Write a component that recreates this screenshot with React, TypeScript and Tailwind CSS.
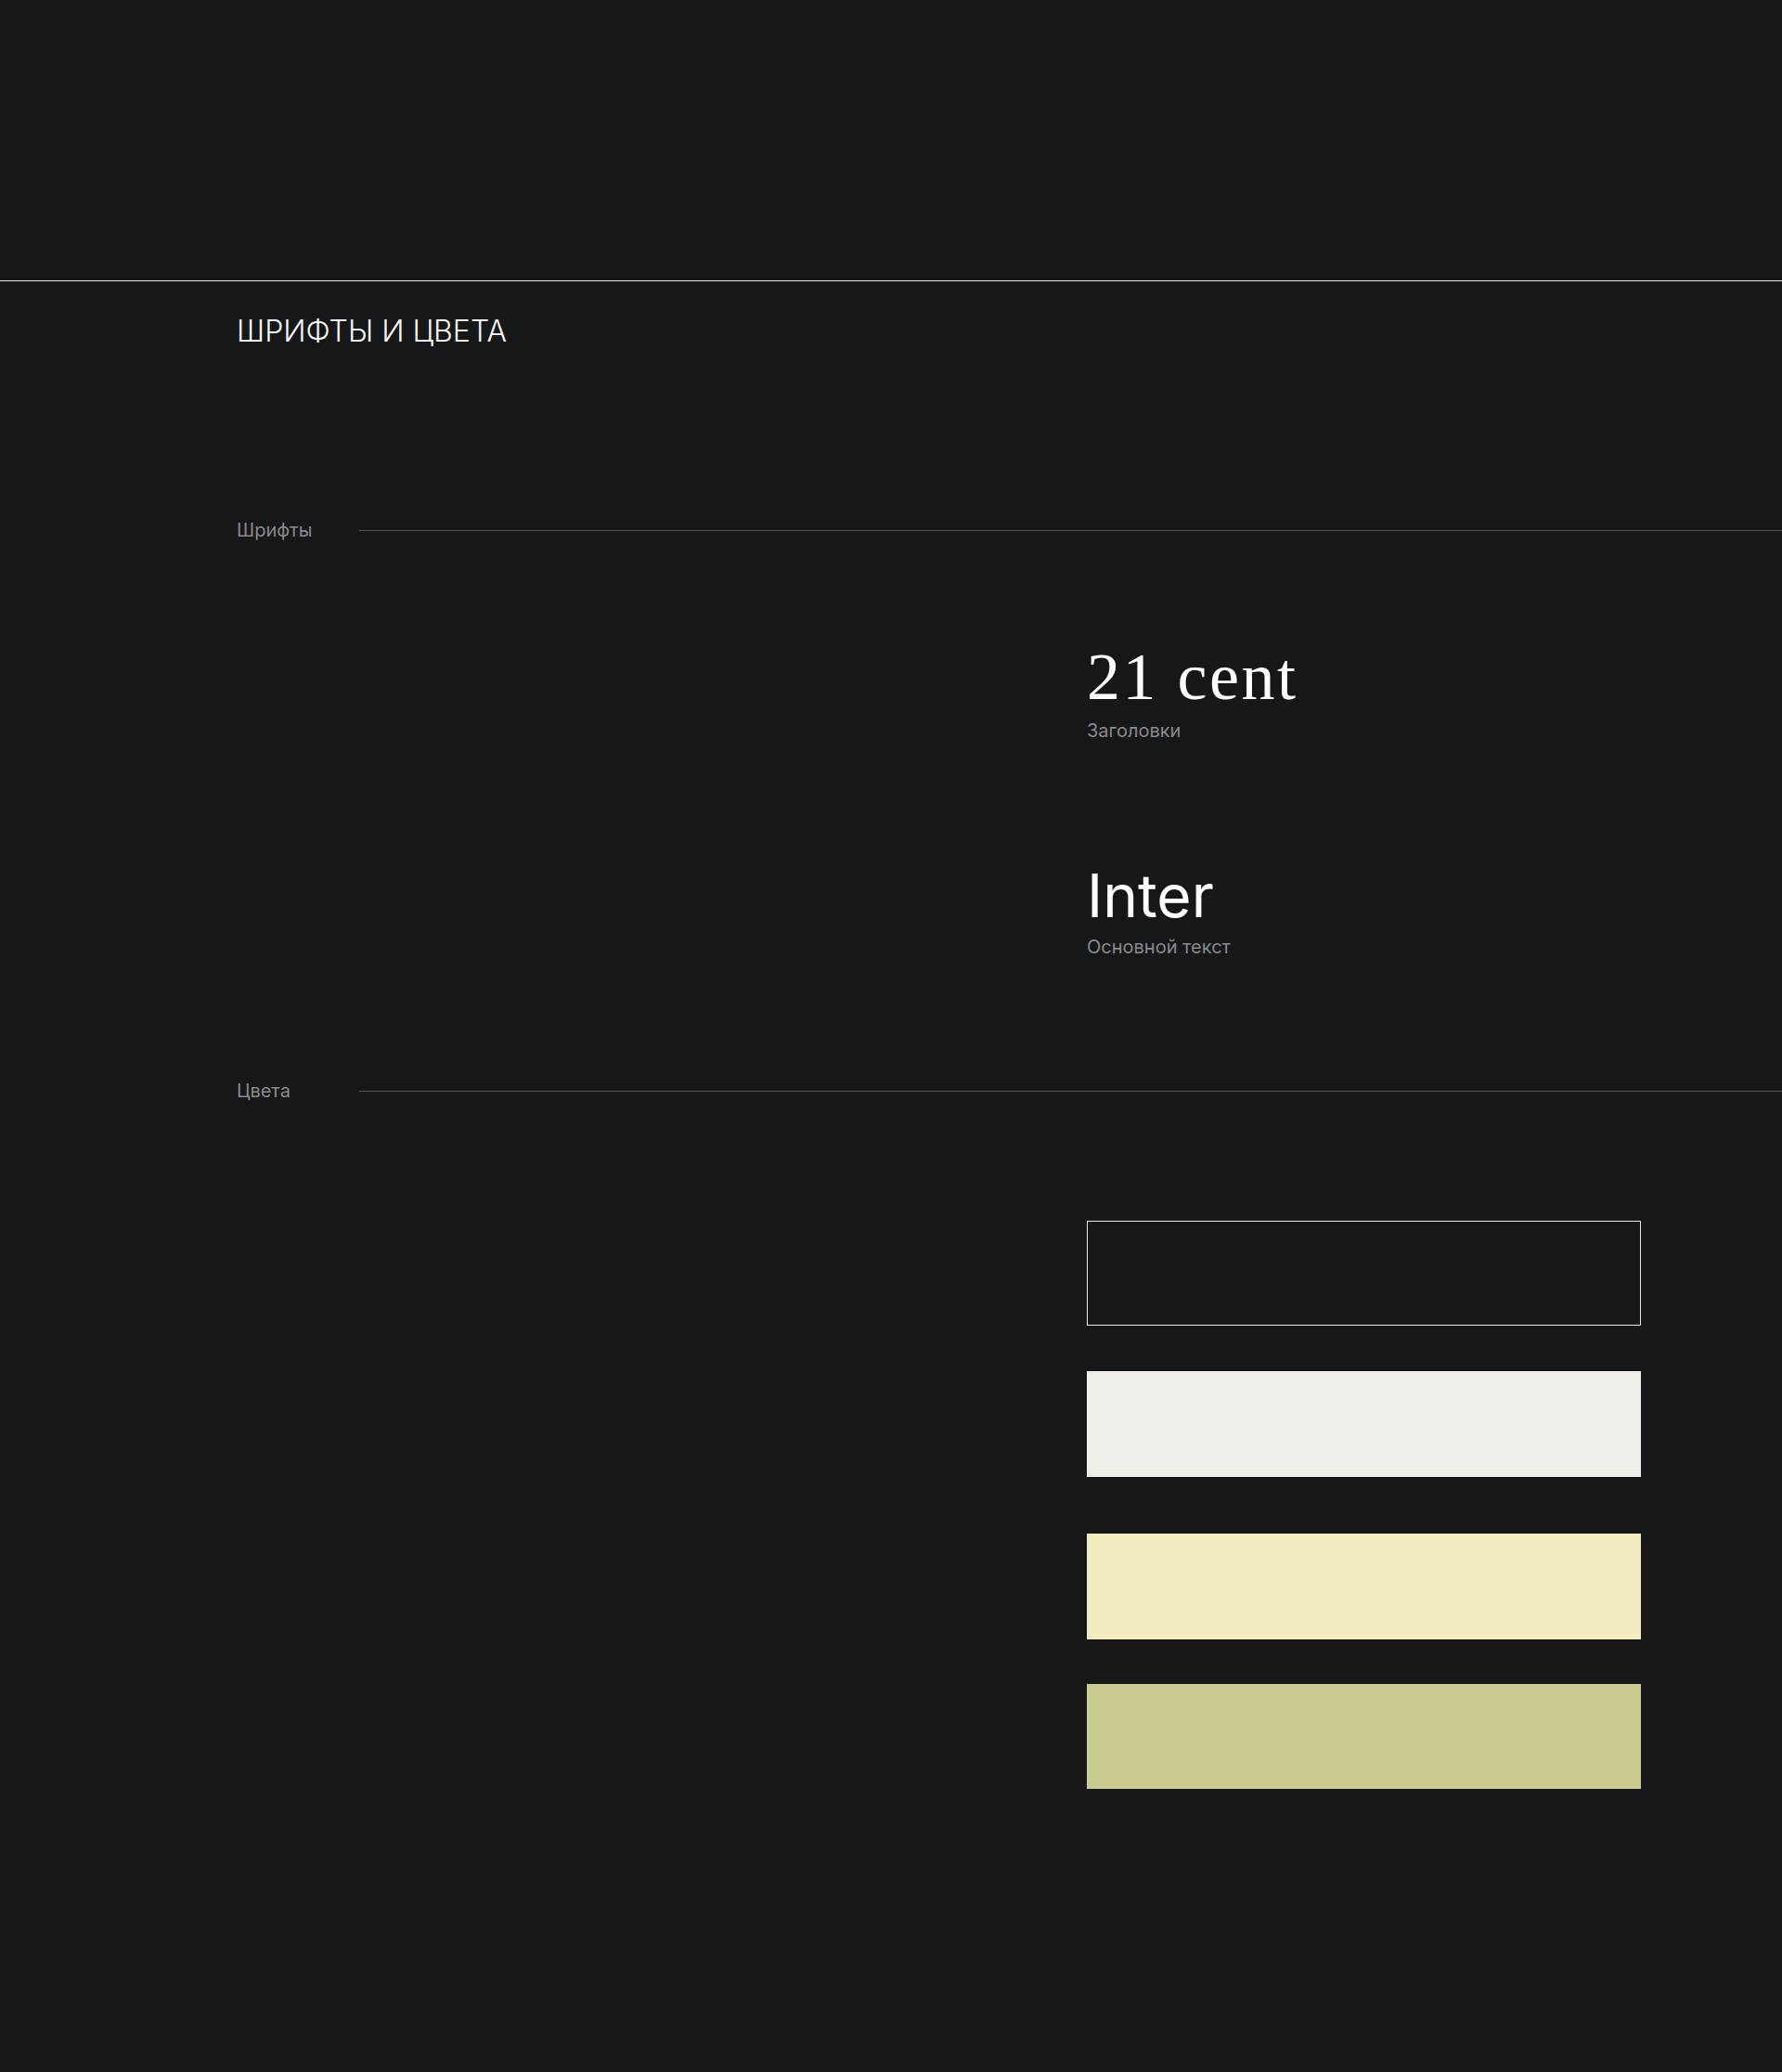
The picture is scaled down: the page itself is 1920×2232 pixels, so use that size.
import React from "react";

const swatches = [
  { cls: "h-[113px] border border-[#e8e8e8] bg-[#161719]", mt: "mt-0" },
  { cls: "h-[114px] bg-[#f0eee8]", mt: "mt-[49px]" },
  { cls: "h-[114px] bg-[#f3ecc0]", mt: "mt-[61px]" },
  { cls: "h-[113px] bg-[#cbcc91]", mt: "mt-[48px]" },
];

export default function App() {
  return (
    <div
      className="min-h-[2232px] w-full bg-[#161719] text-white"
      style={{ fontFamily: "Inter, 'Noto Sans', sans-serif" }}
    >
      <div className="h-[302px]" />
      <section className="border-t border-[#e6e6e6]">
        <div className="pl-[255px] pt-[34px]">
          <h2 className="text-[32px] leading-[40px] font-light text-[#f7f7f7]">
            ШРИФТЫ И ЦВЕТА
          </h2>
        </div>

        {/* Fonts row */}
        <div className="mt-[182px] flex items-center pl-[255px]">
          <span className="w-[132px] text-[20px] leading-[24px] text-[#8a8a8a]">Шрифты</span>
          <div className="h-px flex-1 bg-[#54565a]" />
        </div>

        <div className="pl-[1171px]">
          <div className="mt-[110px]">
            <div
              className="text-[72px] leading-[72px] text-white tracking-[0.035em]"
              style={{ fontFamily: "'Liberation Serif', 'DejaVu Serif', serif" }}
            >
              21 cent
            </div>
            <div className="mt-[10px] text-[20px] leading-[24px] text-[#8a8a8a]">Заголовки</div>
          </div>
          <div className="mt-[134px]">
            <div className="text-[64px] leading-[64px] text-white">Inter</div>
            <div className="mt-[11px] text-[20px] leading-[24px] text-[#8a8a8a]">Основной текст</div>
          </div>
        </div>

        {/* Colors row */}
        <div className="mt-[131px] flex items-center pl-[255px]">
          <span className="w-[132px] text-[20px] leading-[24px] text-[#8a8a8a]">Цвета</span>
          <div className="h-px flex-1 bg-[#54565a]" />
        </div>

        <div className="mt-[128px] pl-[1171px]">
          <div className="flex w-[597px] flex-col">
            {swatches.map((s, i) => (
              <div key={i} className={`${s.mt} ${s.cls}`} />
            ))}
          </div>
        </div>
      </section>
    </div>
  );
}
